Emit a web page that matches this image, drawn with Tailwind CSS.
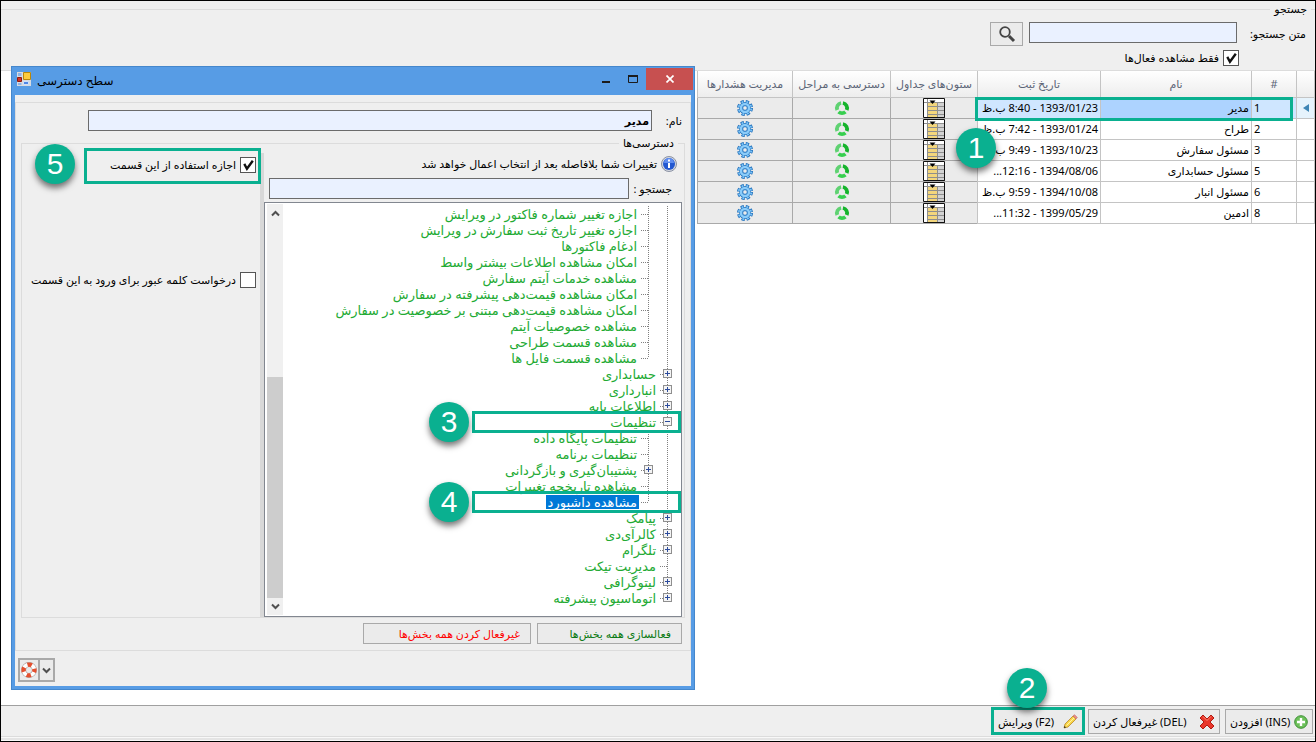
<!DOCTYPE html>
<html lang="fa" dir="rtl">
<head>
    <meta charset="UTF-8">
    <meta name="viewport" content="width=device-width, initial-scale=1.0">
    <title>سطح دسترسی</title>
    <script src="https://cdn.jsdelivr.net/npm/@tailwindcss/browser@4"></script>
</head>
<body class="relative flex min-h-screen flex-col border border-black bg-white font-['Noto_Sans','DejaVu_Sans',sans-serif] text-[11px] leading-4 text-black">
    <!-- Shared icons -->
    <svg class="hidden">
        <symbol id="check" viewBox="0 0 15 15"><path d="M4 6.500 L6.500 11 L12 3.500" fill="none" stroke="#111" stroke-width="2.200"/></symbol>
        <symbol id="gear" viewBox="0 0 16 16">
            <circle cx="8" cy="8" r="6.500" fill="none" stroke="#2272bd" stroke-width="3" stroke-dasharray="3.200 1.905"/>
            <circle cx="8" cy="8" r="5.900" fill="#2272bd"/>
            <circle cx="8" cy="8" r="6.300" fill="none" stroke="#7cc4f8" stroke-width="1.800" stroke-dasharray="1.800 3.148" stroke-dashoffset="-.7"/>
            <circle cx="8" cy="8" r="4" fill="none" stroke="#8accfa" stroke-width="2.600"/>
            <circle cx="8" cy="8" r="2.300" fill="#ebebeb" stroke="#3a86cc"/>
        </symbol>
        <symbol id="ring" viewBox="0 0 16 16">
            <g fill="none" stroke-width="3.800">
                <path d="M8.900 3 A5.100 5.100 0 0 1 12.700 10" stroke="#16b42c"/>
                <path d="M11.400 11.800 A5.100 5.100 0 0 1 4.600 11.800" stroke="#36cf4e"/>
                <path d="M3.300 10 A5.100 5.100 0 0 1 7.100 3" stroke="#5fd272"/>
            </g>
        </symbol>
        <symbol id="cols" viewBox="0 0 22 20">
            <path d="M.5 .5h21v19H.5z" fill="#fff" stroke="#111"/>
            <path d="M5 4h9v15H5z" fill="#f3d67c"/>
            <path d="M14 4h7v15h-7z" fill="#d2d2d2"/>
            <path d="M1 4.500h20M5 8.500h16M5 12.500h16M5 16.500h16M4.500 1v18M14.500 4v15" stroke="#8e8e8e"/>
            <path d="M6.500 2.500h6l-3 3.500z" fill="#000"/>
            <path d="M1 19.500h20.500M21.500 1v18.500" stroke="#111"/>
        </symbol>
    </svg>

    <!-- Search -->
    <div class="bg-[#efefef]">
    <fieldset class="border-y border-[#dcdcdc] pb-1">
        <legend class="mr-1 h-4 px-1">جستجو</legend>
        <div class="flex items-start pt-[5px] pr-[9px]">
            <label for="q" class="w-[69px] pt-1">متن جستجو:</label>
            <input id="q" type="text" class="h-[21px] w-[208px] border border-[#6b6b6b] bg-[#eaf1ff] px-1">
            <button type="button" aria-label="جستجو" class="mr-1.5 grid h-6 w-[33px] place-items-center border border-[#a9a9a9] bg-[#ebebeb]">
                <svg viewBox="0 0 18 18" class="size-[18px]" fill="none" stroke="#444"><circle cx="7" cy="7" r="4.800" stroke-width="1.800"/><path d="M11 11l5 5" stroke-width="3"/></svg>
            </button>
        </div>
        <div class="mt-1 flex pr-[76px]">
            <span class="grid">
                <input id="active" type="checkbox" checked class="col-start-1 row-start-1 size-4 appearance-none border border-[#555] bg-white">
                <svg class="pointer-events-none col-start-1 row-start-1 size-4"><use href="#check"/></svg>
            </span>
            <label for="active" class="mr-1">فقط مشاهده فعال‌ها</label>
        </div>
    </fieldset>
    </div>

    <!-- Roles grid -->
    <main class="flex-1">
        <div class="relative w-[617px]">
            <table class="w-full table-fixed border-collapse">
                <thead>
                    <tr class="h-[26px] bg-linear-to-b from-white to-[#ededed] text-[#5c6577]">
                        <th class="w-[18px] border border-t-0 border-[#c4c4c4]"></th>
                        <th class="w-[45px] border border-t-0 border-[#c4c4c4] font-normal">#</th>
                        <th class="w-[151px] border border-t-0 border-[#c4c4c4] font-normal">نام</th>
                        <th class="w-[123px] border border-t-0 border-[#c4c4c4] font-normal">تاریخ ثبت</th>
                        <th class="w-[87px] border border-t-0 border-[#c4c4c4] font-normal whitespace-nowrap">ستون‌های جداول</th>
                        <th class="w-[98px] border border-t-0 border-[#c4c4c4] font-normal whitespace-nowrap">دسترسی به مراحل</th>
                        <th class="w-[95px] border border-t-0 border-[#c4c4c4] font-normal whitespace-nowrap">مدیریت هشدارها</th>
                    </tr>
                </thead>
                <tbody id="roles"></tbody>
            </table>
            <div class="pointer-events-none absolute top-[26px] right-[22px] h-6 w-[318px] border-3 border-[#0ab090]"></div>
            <div class="absolute top-[57px] right-[319px] grid size-10 place-items-center rounded-full bg-[#0ab090] font-['Liberation_Sans',sans-serif] text-[30px] text-white shadow-[0_4px_6px_#0008]">1</div>
        </div>
    </main>

    <!-- Actions -->
    <footer class="border-t border-[#a0a0a0] bg-[#efefef] pt-[3px]">
        <div class="flex gap-[5px] border-b border-[#dcdcdc] pr-0.5 pb-0.5">
            <button type="button" class="flex h-[25px] w-[88px] items-center justify-between border border-[#a9a9a9] bg-[#ebebeb] px-1 whitespace-nowrap">
                <svg viewBox="0 0 14 14" class="size-3.5"><circle cx="7" cy="7" r="6.300" fill="#6cc05a" stroke="#3d8f35"/><path d="M7 3v8M3 7h8" stroke="#fff" stroke-width="2.400"/></svg>
                <span>(INS) افزودن</span>
            </button>
            <button type="button" class="flex h-[25px] w-[132px] items-center justify-between border border-[#a9a9a9] bg-[#ebebeb] px-1 whitespace-nowrap">
                <svg viewBox="0 0 16 16" class="size-4"><path d="M4 1l4 4 4-4 3 3-4 4 4 4-3 3-4-4-4 4-3-3 4-4-4-4z" fill="#e9372b" stroke="#b01b12"/><path d="M4 2.500l4 4 4-4" fill="none" stroke="#ff8b76"/></svg>
                <span>(DEL) غیرفعال کردن</span>
            </button>
            <div class="relative">
                <button type="button" class="flex h-[25px] w-[90px] items-center justify-between border border-[#3b8ede] bg-[#ebebeb] px-1 whitespace-nowrap">
                    <svg viewBox="0 0 15 15" class="size-[15px]"><path d="M1 14l1-4 8-8 3 3-8 8z" fill="#f9d64a" stroke="#b8862a" stroke-width=".8"/><path d="M3.500 11.500l8-8" stroke="#fff3a8"/><path d="M10 2l1.500-1.300 2.800 2.800L13 5z" fill="#ee8c84" stroke="#b86a60" stroke-width=".6"/><path d="M1 14l.5-2 1.500 1.500z" fill="#222"/></svg>
                    <span>(F2) ویرایش</span>
                </button>
                <div class="pointer-events-none absolute -inset-x-0.5 -top-0.5 -bottom-px border-3 border-[#0ab090]"></div>
                <div class="absolute -top-[41px] right-9 grid size-10 place-items-center rounded-full bg-[#0ab090] font-['Liberation_Sans',sans-serif] text-[30px] text-white shadow-[0_4px_6px_#0008]">2</div>
            </div>
        </div>
        <div class="h-1 border-y border-[#f8f8f8] bg-[#e4e4e4]"></div>
    </footer>

    <!-- Access level dialog -->
    <section role="dialog" aria-labelledby="dlg-title" class="absolute top-[65px] left-[10px] w-[684px] border border-[#4587cc] bg-[#579ce5] px-[3px] pb-[3px]">
        <header dir="ltr" class="flex h-7 items-start">
            <svg viewBox="0 0 14 14" class="mt-[5px] ml-0.5 size-3.5"><path d="M0 0h14v14H0z" fill="#d8dbe0"/><path d="M6.500 .5h7v7h-7z" fill="#fccb3c" stroke="#b8860b"/><path d="M.5 5.500h4v4h-4z" fill="#d53324" stroke="#8e1a10"/><path d="M6.500 9.500h5v3h-5z" fill="#4f87e6" stroke="#cfe0fa"/><path d="M1 1h3.500v3H1zM1 11h3.500v2H1z" fill="#8fb4e6"/></svg>
            <h2 id="dlg-title" dir="rtl" class="mt-1.5 ml-1.5 flex-1 text-left text-[12px]">سطح دسترسی</h2>
            <button type="button" aria-label="کوچک" class="grid h-6 w-7 place-items-center"><svg viewBox="0 0 10 10" class="size-2.5"><path d="M1 8h8" stroke="#1c1c1c" stroke-width="2"/></svg></button>
            <button type="button" aria-label="بزرگ" class="grid h-6 w-[26px] place-items-center"><svg viewBox="0 0 10 8" class="h-2 w-2.5"><path d="M.5 1v6.500h9V1" fill="none" stroke="#1c1c1c"/><path d="M0 1h10" stroke="#1c1c1c" stroke-width="2"/></svg></button>
            <button type="button" aria-label="بستن" class="-mr-0.5 mt-px grid h-[22px] w-[47px] place-items-center bg-[#c75050]"><svg viewBox="0 0 8 8" class="size-2"><path d="M.5 .5l7 7M7.500 .5l-7 7" stroke="#fff" stroke-width="1.700"/></svg></button>
        </header>
        <div class="bg-[#efefef] pt-[7px] pb-1">
            <div class="border border-[#dcdcdc] px-[5px] pt-[7px] pb-1.5">
                <div class="flex h-[21px] items-center pr-[3px]">
                    <label for="name" class="w-[30px]">نام:</label>
                    <input id="name" type="text" value="مدیر" class="h-[21px] w-[564px] border border-[#6b6b6b] bg-[#eaf1ff] px-0.5 font-bold">
                </div>
                <fieldset class="mt-1 border border-[#dcdcdc] pr-0.5">
                    <legend class="mr-1 h-4 px-1">دسترسی‌ها</legend>
                    <div class="flex">
                        <div class="w-[418px] pt-0.5">
                            <p class="flex h-[22px] items-center gap-1 pr-[5px]">
                                <svg viewBox="0 0 16 16" class="size-4"><circle cx="8" cy="8" r="7.500" fill="#d5d9e2" stroke="#8b92a3"/><circle cx="8" cy="8" r="6" fill="#2458d0"/><path d="M3 7a5 5 0 0 1 10 0z" fill="#5f8df0"/><path d="M8 7v5M8 3.500v2" stroke="#fff" stroke-width="2"/></svg>
                                <span>تغییرات شما بلافاصله بعد از انتخاب اعمال خواهد شد</span>
                            </p>
                            <div class="mt-[3px] flex items-center pr-2.5">
                                <label for="find" class="w-[43px]">جستجو :</label>
                                <input id="find" type="text" class="h-[21px] w-[360px] border border-[#6b6b6b] bg-[#eaf1ff] px-1">
                            </div>
                            <div class="mt-[3px] flex border border-[#828790] bg-white pl-0.5">
                                <ul id="tree" role="tree" class="flex-1 pt-[3px] pb-2.5 text-[13px] text-[#22aa33]"></ul>
                                <div class="my-px flex w-4 flex-col items-center bg-[#f0f0f0]">
                                    <svg viewBox="0 0 9 7" class="mt-1.5 h-[7px] w-[9px]"><path d="M1 5.500L4.500 2 8 5.500" fill="none" stroke="#505050" stroke-width="2"/></svg>
                                    <div class="mt-40 w-full flex-1 bg-[#cdcdcd]"></div>
                                    <svg viewBox="0 0 9 7" class="my-[5px] h-[7px] w-[9px]"><path d="M1 1.500L4.500 5 8 1.500" fill="none" stroke="#505050" stroke-width="2"/></svg>
                                </div>
                            </div>
                        </div>
                        <div class="mt-0.5 w-1 bg-[#d8d8d8]"></div>
                        <div class="relative flex-1 pt-1.5 pr-1">
                            <div class="flex">
                                <span class="grid">
                                    <input id="allow" type="checkbox" checked class="col-start-1 row-start-1 size-4 appearance-none border border-[#555] bg-white">
                                    <svg class="pointer-events-none col-start-1 row-start-1 size-4"><use href="#check"/></svg>
                                </span>
                                <label for="allow" class="mr-1">اجازه استفاده از این قسمت</label>
                            </div>
                            <div class="mt-[99px] flex">
                                <input id="pass" type="checkbox" class="size-4 appearance-none border border-[#555] bg-white">
                                <label for="pass" class="mr-1 whitespace-nowrap">درخواست کلمه عبور برای ورود به این قسمت</label>
                            </div>
                            <div class="pointer-events-none absolute -top-[3px] -right-px h-9 w-[177px] border-3 border-[#0ab090]"></div>
                            <div class="absolute -top-[7px] right-[185px] grid size-10 place-items-center rounded-full bg-[#0ab090] font-['Liberation_Sans',sans-serif] text-[30px] text-white shadow-[0_4px_6px_#0008]">5</div>
                        </div>
                    </div>
                </fieldset>
                <div class="mt-[5px] flex gap-1.5 pr-[3px]">
                    <button type="button" class="h-[21px] w-[145px] border border-[#a9a9a9] bg-[#ebebeb] pr-2.5 text-right text-[#0a7a12]">فعالسازی همه بخش‌ها</button>
                    <button type="button" class="h-[21px] w-[168px] border border-[#a9a9a9] bg-[#ebebeb] pr-2.5 text-right text-[#ff0000]">غیرفعال کردن همه بخش‌ها</button>
                </div>
            </div>
            <div dir="ltr" class="mt-[7px] flex pl-[3px]">
                <button type="button" aria-label="راهنما" class="grid h-6 w-[22px] place-items-center border-2 border-[#a9a9a9] bg-[#ebebeb]">
                    <svg viewBox="0 0 16 16" class="size-4"><circle cx="8" cy="8" r="5.400" fill="none" stroke="#a89c9a" stroke-width="5"/><circle cx="8" cy="8" r="5.400" fill="none" stroke="#fff" stroke-width="3.800"/><circle cx="8" cy="8" r="5.400" fill="none" stroke="#e4502f" stroke-width="4.400" stroke-dasharray="4.400 4.082" stroke-dashoffset="2.200"/></svg>
                </button>
                <button type="button" aria-label="گزینه‌ها" class="-ml-0.5 grid h-6 w-[17px] place-items-center border-2 border-[#a9a9a9] bg-[#ebebeb]">
                    <svg viewBox="0 0 9 7" class="h-[7px] w-[9px]"><path d="M1 1.500L4.500 5 8 1.500" fill="none" stroke="#505050" stroke-width="2"/></svg>
                </button>
            </div>
        </div>
    </section>

    <script>
        const roles = [
            [1, 'مدیر', '1393/01/23 - 8:40 ب.ظ'],
            [2, 'طراح', '1393/01/24 - 7:42 ب.ظ'],
            [3, 'مسئول سفارش', '1393/10/23 - 9:49 ب.ظ'],
            [5, 'مسئول حسابداری', '1394/08/06 - 12:16...'],
            [6, 'مسئول انبار', '1394/10/08 - 9:59 ب.ظ'],
            [8, 'ادمین', '1399/05/29 - 11:32...'],
        ];
        const icon = (id, cls) => `<td class="border border-[#a9a9a9] bg-[#ebebeb]"><svg class="mx-auto ${cls}"><use href="#${id}"/></svg></td>`;
        document.getElementById('roles').innerHTML = roles.map(([id, name, date], i) => `
            <tr class="h-[21px] ${i ? '' : 'bg-[#cfe6ff]'}">
                <td class="border border-[#c4c4c4] ${i ? '' : 'bg-[#e6f3fc]'}">${i ? '' : '<svg viewBox="0 0 6 8" class="mx-auto h-2 w-1.5"><path d="M6 0v8L0 4z" fill="#3f86b5"/></svg>'}</td>
                <td class="border border-[#c4c4c4] pl-0.5 text-left">${id}</td>
                <td class="border border-[#c4c4c4] pr-0.5 ${i ? '' : 'bg-[#add3ff]'}">${name}</td>
                <td class="border border-[#c4c4c4] pr-0.5 whitespace-nowrap">${date}</td>
                ${icon('cols', 'h-5 w-[22px]')}${icon('ring', 'size-4')}${icon('gear', 'size-4')}
            </tr>`).join('');

        // [level, text, expander, callout number]
        const nodes = [
            [2, 'اجازه تغییر شماره فاکتور در ویرایش'],
            [2, 'اجازه تغییر تاریخ ثبت سفارش در ویرایش'],
            [2, 'ادغام فاکتورها'],
            [2, 'امکان مشاهده اطلاعات بیشتر واسط'],
            [2, 'مشاهده خدمات آیتم سفارش'],
            [2, 'امکان مشاهده قیمت‌دهی پیشرفته در سفارش'],
            [2, 'امکان مشاهده قیمت‌دهی مبتنی بر خصوصیت در سفارش'],
            [2, 'مشاهده خصوصیات آیتم'],
            [2, 'مشاهده قسمت طراحی'],
            [2, 'مشاهده قسمت فایل ها'],
            [1, 'حسابداری', '+'],
            [1, 'انبارداری', '+'],
            [1, 'اطلاعات پایه', '+'],
            [1, 'تنظیمات', '-', 3],
            [2, 'تنظیمات پایگاه داده'],
            [2, 'تنظیمات برنامه'],
            [2, 'پشتیبان‌گیری و بازگردانی', '+'],
            [2, 'مشاهده تاریخچه تغییرات'],
            [2, 'مشاهده داشبورد', '', 4],
            [1, 'پیامک', '+'],
            [1, 'کالرآی‌دی', '+'],
            [1, 'تلگرام', '+'],
            [1, 'مدیریت تیکت'],
            [1, 'لیتوگرافی', '+'],
            [1, 'اتوماسیون پیشرفته', '+'],
        ];
        // one gutter cell: vertical guide, horizontal branch and expander box
        const gutter = (branch, last, box) => `<svg viewBox="0 0 19 16" class="h-4 w-[19px] shrink-0" shape-rendering="crispEdges" fill="none" stroke="#808080">
            <path d="M9.500 0V${last ? 8 : 16}${branch ? 'M9 8.500H1' : ''}" stroke-dasharray="1 1"/>
            ${box ? `<path d="M5.500 3.500h8v8h-8z" fill="#f4f4f4" stroke="#8f8f8f"/><path d="M7 7.500h5${box === '+' ? 'M9.500 5v5' : ''}" stroke="#2c4b9c"/>` : ''}
        </svg>`;
        document.getElementById('tree').innerHTML = nodes.map(([level, text, box, mark], i) => {
            const next = nodes[i + 1];
            const end = !next || next[0] < level;
            return `<li role="treeitem" class="relative flex h-4 items-center pr-1">
                ${gutter(level === 1, !next, level === 1 && box)}${level === 2 ? gutter(true, end, box) : ''}
                <span class="h-[14px] px-0.5 leading-[14px] whitespace-nowrap ${mark === 4 ? 'bg-[#0078d7] text-white' : ''}">${text}</span>
                ${mark ? `<div class="pointer-events-none absolute -top-[3px] right-0 z-10 h-[22px] w-[209px] border-3 border-[#0ab090]"></div>
                <div class="absolute -top-3 right-[212px] z-10 grid size-10 place-items-center rounded-full bg-[#0ab090] font-['Liberation_Sans',sans-serif] text-[30px] text-white shadow-[0_4px_6px_#0008]">${mark}</div>` : ''}
            </li>`;
        }).join('');
    </script>
</body>
</html>
